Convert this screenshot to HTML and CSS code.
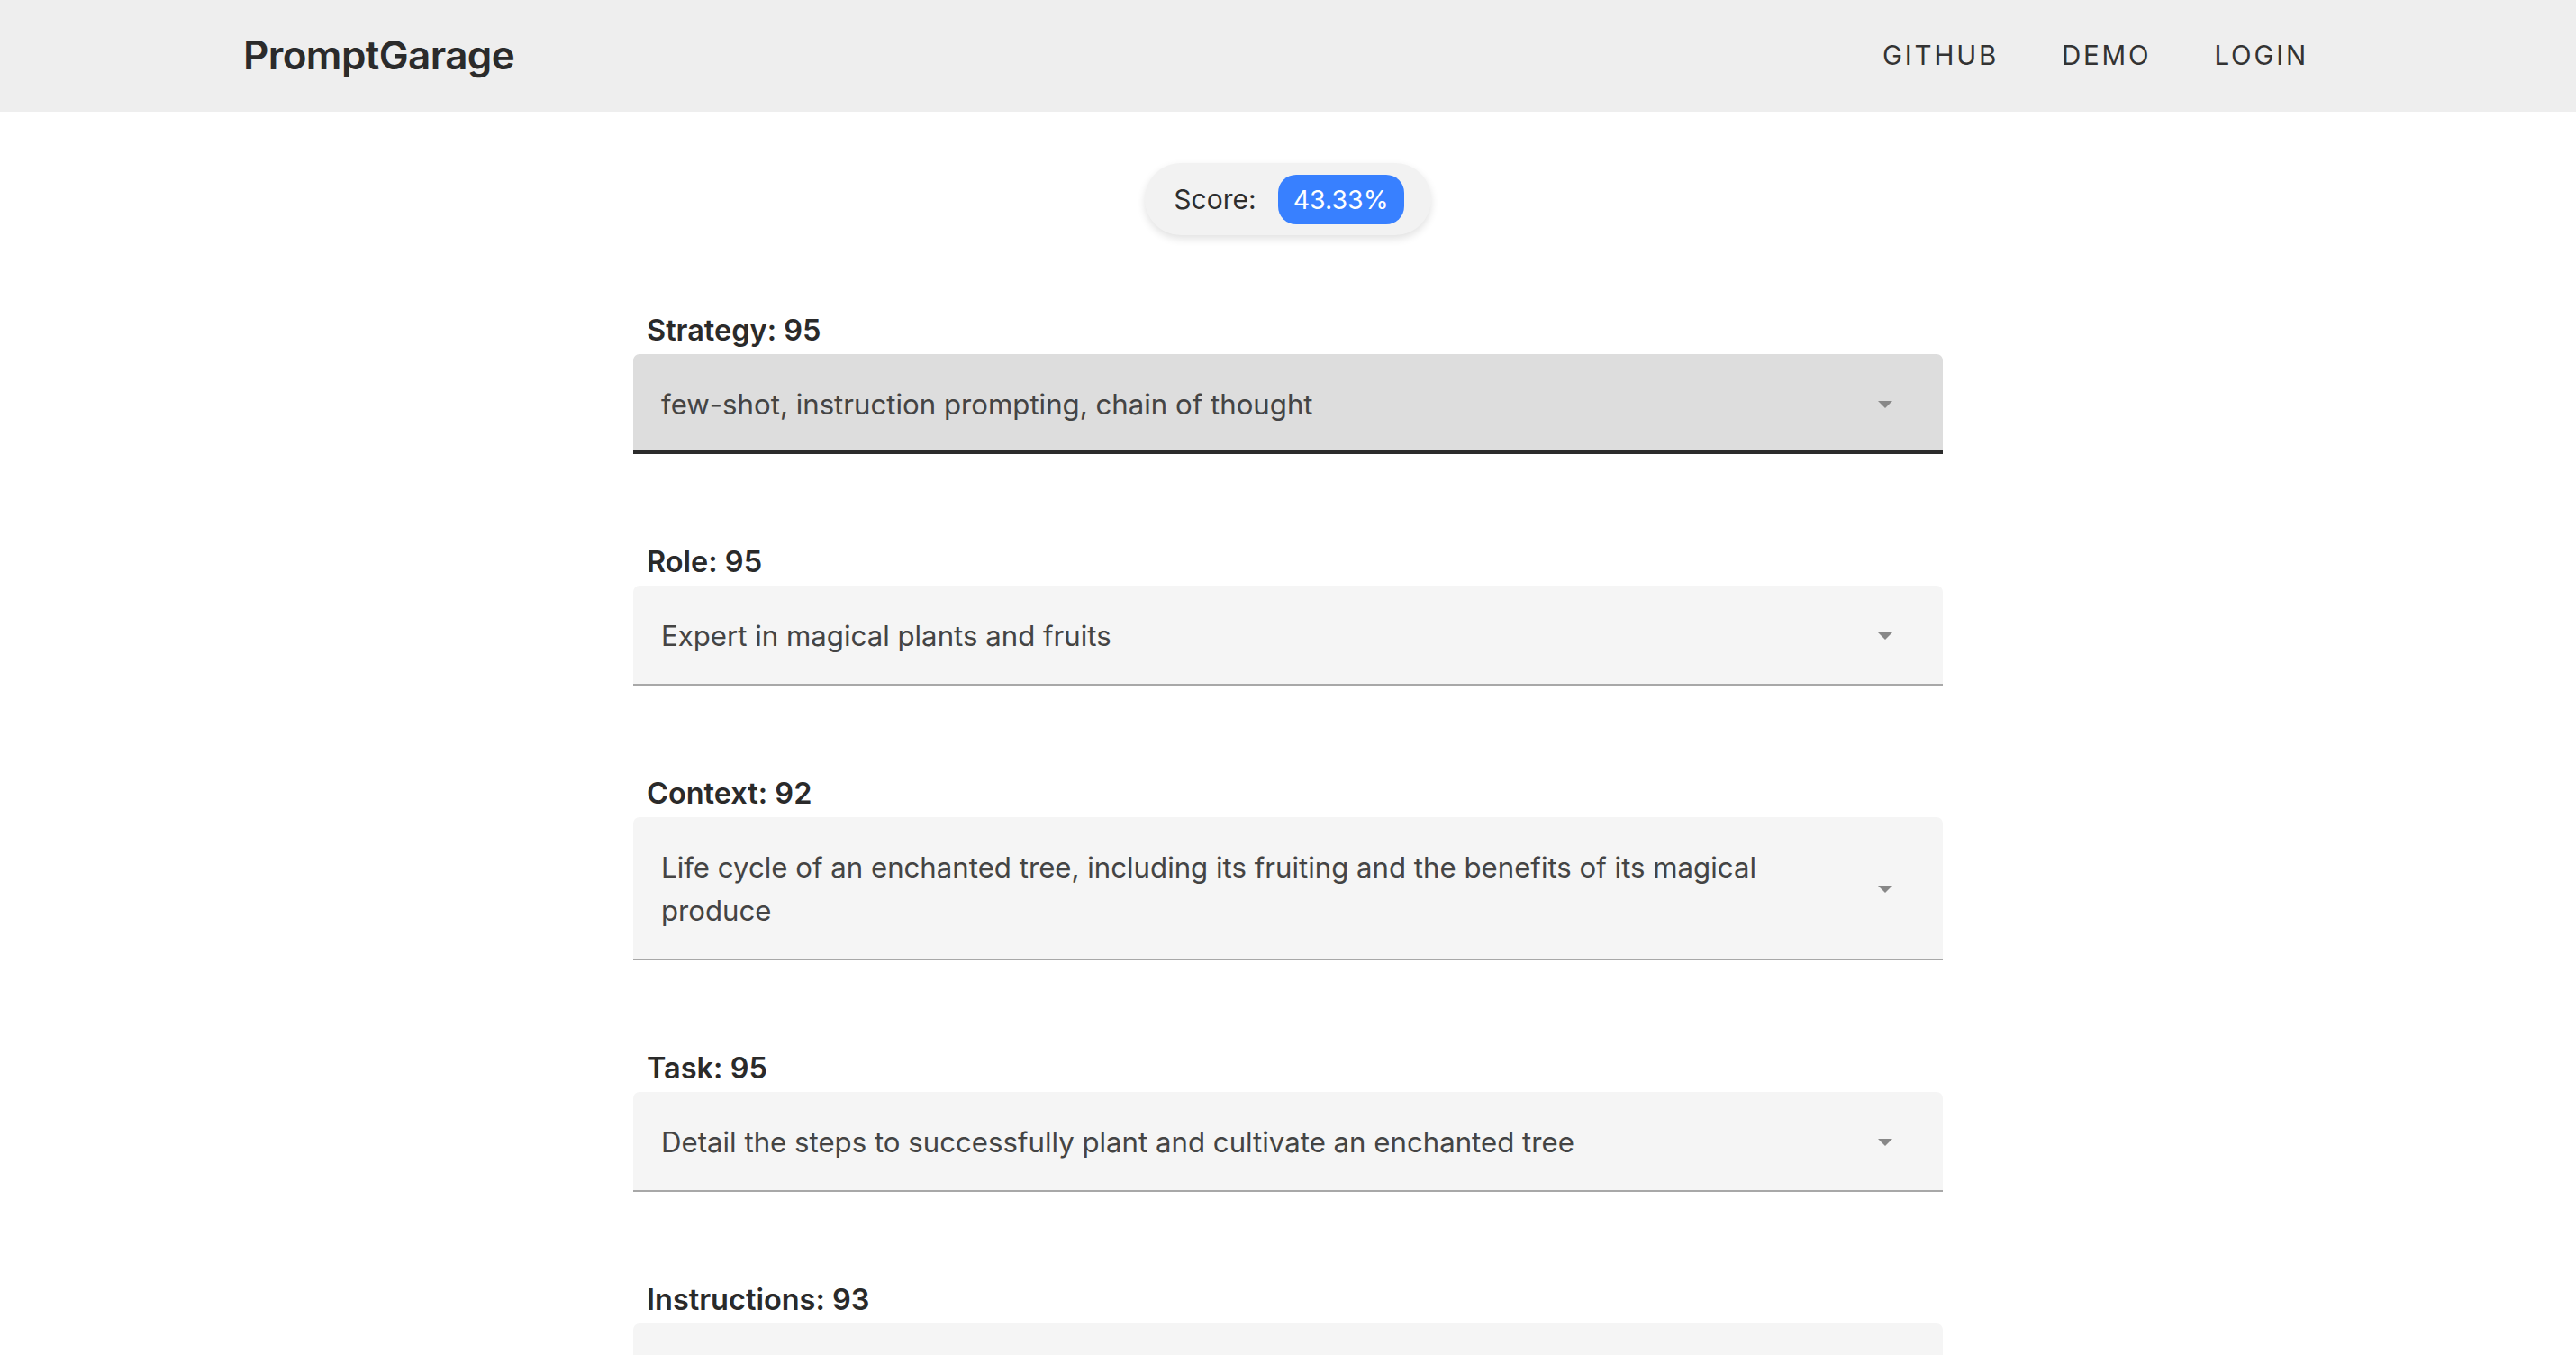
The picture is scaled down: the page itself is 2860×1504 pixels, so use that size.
FILE: index.html
```html
<!DOCTYPE html>
<html lang="en">
<head>
<meta charset="utf-8">
<title>PromptGarage</title>
<link rel="stylesheet" href="styles.css">
</head>
<body>
<header class="topbar">
  <div class="topbar-inner">
    <div class="logo">PromptGarage</div>
    <nav class="nav">
      <a class="nav-btn">GITHUB</a>
      <a class="nav-btn">DEMO</a>
      <a class="nav-btn">LOGIN</a>
    </nav>
  </div>
</header>
<main class="main">
  <div class="score-chip">
    <span class="score-label">Score:</span>
    <span class="score-badge">43.33%</span>
  </div>
  <section class="fields">
    <div class="field">
      <div class="field-label">Strategy: 95</div>
      <div class="select select-active">
        <span class="select-text">few-shot, instruction prompting, chain of thought</span>
        <svg class="arrow" viewBox="0 0 16 8" width="16" height="8"><polygon points="0,0 16,0 8,8"/></svg>
      </div>
    </div>
    <div class="field">
      <div class="field-label">Role: 95</div>
      <div class="select">
        <span class="select-text">Expert in magical plants and fruits</span>
        <svg class="arrow" viewBox="0 0 16 8" width="16" height="8"><polygon points="0,0 16,0 8,8"/></svg>
      </div>
    </div>
    <div class="field">
      <div class="field-label">Context: 92</div>
      <div class="select">
        <span class="select-text">Life cycle of an enchanted tree, including its fruiting and the benefits of its magical produce</span>
        <svg class="arrow" viewBox="0 0 16 8" width="16" height="8"><polygon points="0,0 16,0 8,8"/></svg>
      </div>
    </div>
    <div class="field">
      <div class="field-label">Task: 95</div>
      <div class="select">
        <span class="select-text">Detail the steps to successfully plant and cultivate an enchanted tree</span>
        <svg class="arrow" viewBox="0 0 16 8" width="16" height="8"><polygon points="0,0 16,0 8,8"/></svg>
      </div>
    </div>
    <div class="field">
      <div class="field-label">Instructions: 93</div>
      <div class="select">
        <span class="select-text">Provide clear, step-by-step guidance suitable for beginners</span>
        <svg class="arrow" viewBox="0 0 16 8" width="16" height="8"><polygon points="0,0 16,0 8,8"/></svg>
      </div>
    </div>
  </section>
</main>
</body>
</html>
```
FILE: styles.css
```css
html, body {
  margin: 0;
  padding: 0;
  background: #ffffff;
  font-family: Inter, "Noto Sans", sans-serif;
  color: #2b2b2b;
}

.topbar {
  background: #eeeeee;
  height: 124px;
}

.topbar-inner {
  height: 100%;
  padding: 0 270px;
  display: flex;
  align-items: center;
  justify-content: space-between;
}

.logo {
  font-size: 44px;
  font-weight: 600;
  letter-spacing: -0.6px;
  color: #2b2b2b;
  margin-top: -3px;
}

.nav {
  display: flex;
  gap: 16px;
  margin-top: -3px;
}

.nav-btn {
  padding: 10px 27px;
  font-size: 29.5px;
  font-weight: 400;
  letter-spacing: 2.8px;
  color: #333333;
  cursor: pointer;
}

.nav-btn:first-child {
  padding-left: 32px;
}

.main {
  display: flex;
  flex-direction: column;
  align-items: center;
  padding-top: 57px;
}

.score-chip {
  display: flex;
  align-items: center;
  gap: 24px;
  height: 80px;
  box-sizing: border-box;
  padding: 0 30px 0 32px;
  background: #f2f2f2;
  border-radius: 40px;
  box-shadow: 0 4px 10px rgba(0, 0, 0, 0.12);
}

.score-label {
  font-size: 30px;
  color: #2e2e2e;
}

.score-badge {
  background: #3880ff;
  color: #ffffff;
  font-size: 28.5px;
  height: 55px;
  line-height: 55px;
  padding: 0 17px;
  border-radius: 20px;
}

.fields {
  width: 1454px;
  margin-top: 86px;
  display: flex;
  flex-direction: column;
  gap: 100px;
}

.field-label {
  font-size: 32.5px;
  font-weight: 600;
  line-height: 40px;
  letter-spacing: 0;
  color: #2a2a2a;
  padding-left: 15px;
  margin-bottom: 6px;
}

.select {
  display: flex;
  align-items: center;
  background: #f5f5f5;
  border-radius: 7px 7px 0 0;
  border-bottom: 2px solid #a8a8a8;
  padding: 32px 56px 29px 31px;
}

.select-active {
  background: #dddddd;
  border-bottom: 4px solid #2b2b2b;
  padding-bottom: 27px;
}

.select-text {
  flex: 1;
  font-size: 31.2px;
  line-height: 48px;
  color: #444444;
  padding-right: 60px;
}

.arrow {
  flex: none;
  fill: #888888;
}
```
